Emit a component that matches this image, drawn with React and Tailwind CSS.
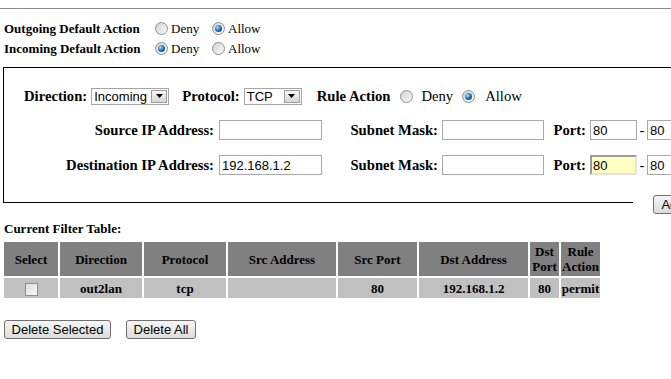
import React from "react";

// classic windows style radio
function Radio({ checked }) {
  return (
    <span className="inline-flex items-center justify-center w-[13px] h-[13px] shrink-0 rounded-full border border-[#8f8f8f] bg-linear-to-br from-[#d2d2d2] to-[#fbfbfb]">
      {checked && (
        <span className="w-[7px] h-[7px] rounded-full bg-[radial-gradient(circle_at_35%_35%,#a5dcff,#1868ab_55%,#0b3a69)]" />
      )}
    </span>
  );
}

function Select({ value, width }) {
  return (
    <span className={`inline-flex items-center h-[17px] shrink-0 border border-[#a5a5a5] bg-white pl-[2px] pr-px ${width}`}>
      <span className="flex-1 text-[13px] leading-none font-['Liberation_Sans',Arial,sans-serif]">{value}</span>
      <span className="flex items-center justify-center w-[16px] h-[13px] border border-[#9c9c9c] bg-linear-to-b from-[#f6f6f6] to-[#d6d6d6]">
        <svg width="7" height="4" viewBox="0 0 7 4">
          <path d="M0 0h7L3.5 4z" fill="#000" />
        </svg>
      </span>
    </span>
  );
}

function Field({ value = "", width, yellow }) {
  return (
    <input
      type="text"
      readOnly
      value={value}
      className={`h-[20px] shrink-0 px-[2px] text-[13px] text-black font-['Liberation_Sans',Arial,sans-serif] outline-none ${width} ${
        yellow
          ? "bg-[#ffffc0] border-2 border-t-[#9a9a9a] border-l-[#9a9a9a] border-r-[#e3e3e3] border-b-[#e3e3e3] pl-px"
          : "bg-white border border-[#a9a9a9]"
      }`}
    />
  );
}

function WinButton({ children, width }) {
  return (
    <button
      className={`h-[19px] rounded-[3px] border border-[#707070] bg-linear-to-b from-[#f6f6f6] to-[#dcdcdc] text-[13px] leading-none text-black font-['Liberation_Sans',Arial,sans-serif] ${width}`}
    >
      {children}
    </button>
  );
}

const columns = [
  { label: "Select", w: "w-[54px]" },
  { label: "Direction", w: "w-[82px]" },
  { label: "Protocol", w: "w-[82px]" },
  { label: "Src Address", w: "w-[108px]" },
  { label: "Src Port", w: "w-[79px]" },
  { label: "Dst Address", w: "w-[109px]" },
  { label: "Dst Port", w: "w-[29px]" },
  { label: "Rule Action", w: "w-[39px]" },
];

const rows = [
  { direction: "out2lan", protocol: "tcp", src: "", srcPort: "80", dst: "192.168.1.2", dstPort: "80", action: "permit" },
];

export default function App() {
  return (
    <div className="w-[671px] h-[379px] overflow-hidden bg-white text-black font-['Liberation_Serif','Times_New_Roman',serif]">
      <div className="h-[8px]" />
      <div className="h-px bg-[#8a8a8a]" />

      {/* Default actions */}
      <div className="pl-[4px] pt-[9px] text-[13px] leading-none">
        <div className="flex items-center h-[20px]">
          <span className="w-[151px] font-bold">Outgoing Default Action</span>
          <span className="flex items-center w-[57px]">
            <Radio />
            <span className="ml-[3px]">Deny</span>
          </span>
          <Radio checked />
          <span className="ml-[3px]">Allow</span>
        </div>
        <div className="flex items-center h-[20px]">
          <span className="w-[151px] font-bold">Incoming Default Action</span>
          <span className="flex items-center w-[57px]">
            <Radio checked />
            <span className="ml-[3px]">Deny</span>
          </span>
          <Radio />
          <span className="ml-[3px]">Allow</span>
        </div>
      </div>

      {/* Rule form */}
      <div className="ml-[3px] mt-[9px] flex border-t border-black">
        <div className="w-[630px] shrink-0 border-l border-b border-black pt-[18px] pb-[27px] text-[14.67px] leading-none">
          <div className="flex items-center h-[20px] pl-[20px] *:shrink-0">
            <span className="font-bold">Direction:</span>
            <span className="ml-[4px] flex"><Select value="Incoming" width="w-[78px]" /></span>
            <span className="ml-[13px] font-bold">Protocol:</span>
            <span className="ml-[4px] flex"><Select value="TCP" width="w-[58px]" /></span>
            <span className="ml-[15px] font-bold">Rule Action</span>
            <span className="ml-[10px] flex"><Radio /></span>
            <span className="ml-[8px]">Deny</span>
            <span className="ml-[9px] flex"><Radio checked /></span>
            <span className="ml-[10px]">Allow</span>
          </div>

          <div className="flex items-center h-[20px] mt-[14px] *:shrink-0">
            <span className="w-[215px] pr-[5px] text-right font-bold">Source IP Address:</span>
            <Field width="w-[103px]" />
            <span className="w-[120px] pr-[4px] text-right font-bold">Subnet Mask:</span>
            <Field width="w-[102px]" />
            <span className="w-[46px] pr-[4px] text-right font-bold">Port:</span>
            <Field value="80" width="w-[47px]" />
            <span className="w-[10px] text-center">-</span>
            <Field value="80" width="w-[47px]" />
          </div>

          <div className="flex items-center h-[20px] mt-[15px] *:shrink-0">
            <span className="w-[215px] pr-[5px] text-right font-bold">Destination IP Address:</span>
            <Field value="192.168.1.2" width="w-[103px]" />
            <span className="w-[120px] pr-[4px] text-right font-bold">Subnet Mask:</span>
            <Field width="w-[102px]" />
            <span className="w-[46px] pr-[4px] text-right font-bold">Port:</span>
            <Field value="80" width="w-[47px]" yellow />
            <span className="w-[10px] text-center">-</span>
            <Field value="80" width="w-[47px]" />
          </div>
        </div>
        <div className="ml-[20px] self-end mb-[-13px] shrink-0">
          <WinButton width="w-[40px]">Add</WinButton>
        </div>
      </div>

      {/* Filter table */}
      <div className="mt-[18px] pl-[4px] h-[15px] text-[13px] leading-[15px] font-bold">Current Filter Table:</div>
      <table className="mt-[4px] ml-[2px] w-[600px] table-fixed border-separate border-spacing-[2px] text-[13px] leading-[15px] font-bold">
        <thead>
          <tr>
            {columns.map((c) => (
              <th key={c.label} className={`h-[34px] p-0 bg-[#808080] text-center align-middle font-bold ${c.w}`}>
                {c.label}
              </th>
            ))}
          </tr>
        </thead>
        <tbody>
          {rows.map((r, i) => (
            <tr key={i}>
              <td className="h-[20px] p-0 bg-[#c0c0c0] text-center align-middle">
                <span className="inline-block align-middle w-[13px] h-[13px] border border-[#8e8f8f] bg-linear-to-br from-[#dcdcdc] to-[#fafafa]" />
              </td>
              <td className="p-0 bg-[#c0c0c0] text-center">{r.direction}</td>
              <td className="p-0 bg-[#c0c0c0] text-center">{r.protocol}</td>
              <td className="p-0 bg-[#c0c0c0] text-center">{r.src}</td>
              <td className="p-0 bg-[#c0c0c0] text-center">{r.srcPort}</td>
              <td className="p-0 bg-[#c0c0c0] text-center">{r.dst}</td>
              <td className="p-0 bg-[#c0c0c0] text-center">{r.dstPort}</td>
              <td className="p-0 bg-[#c0c0c0] text-center">{r.action}</td>
            </tr>
          ))}
        </tbody>
      </table>

      <div className="mt-[20px] pl-[4px] flex gap-[15px]">
        <WinButton width="w-[107px]">Delete Selected</WinButton>
        <WinButton width="w-[70px]">Delete All</WinButton>
      </div>
    </div>
  );
}
